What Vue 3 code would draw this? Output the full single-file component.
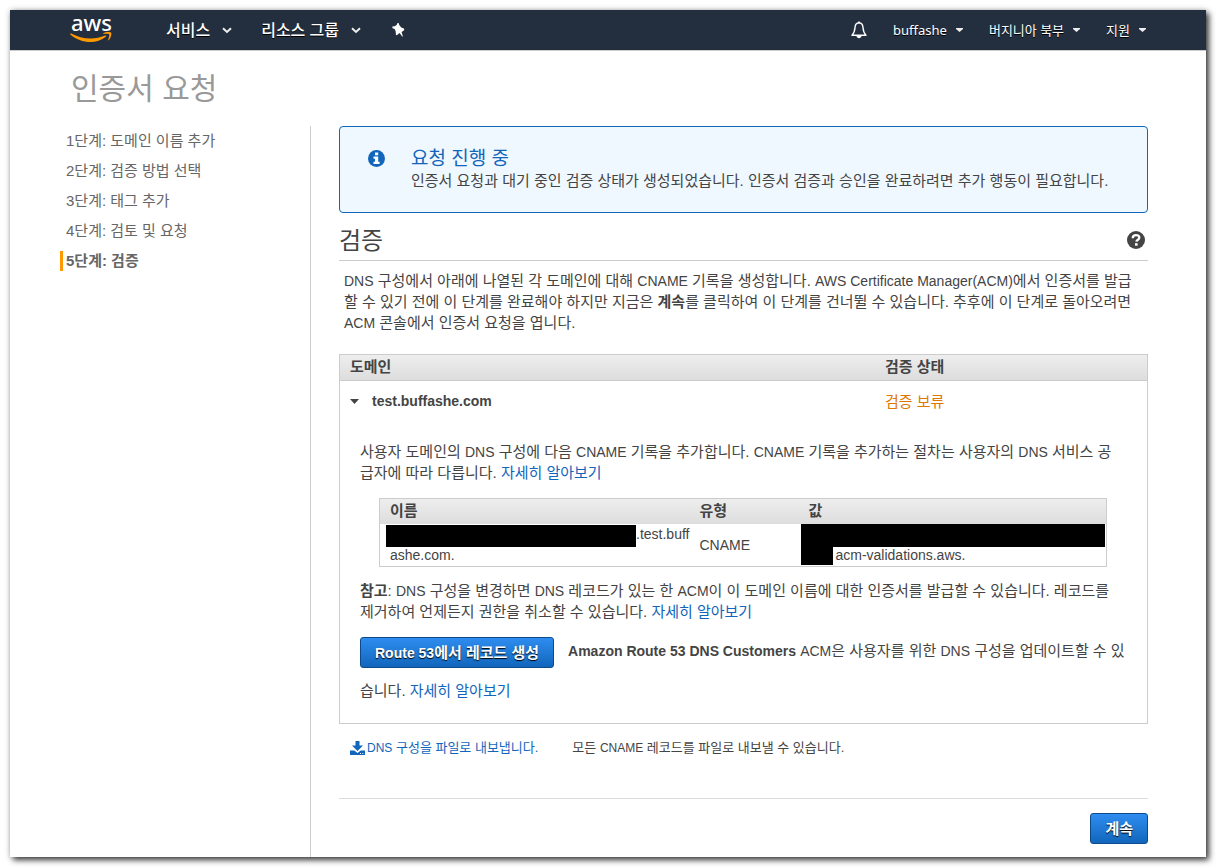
<script setup>
import { ref } from 'vue'

const steps = [
  '1단계: 도메인 이름 추가',
  '2단계: 검증 방법 선택',
  '3단계: 태그 추가',
  '4단계: 검토 및 요청',
  '5단계: 검증',
]
const current = 4
const open = ref(true)
</script>

<template>
  <div class="window">
    <header class="nav">
      <a class="logo" href="#" aria-label="AWS">
        <svg width="42" height="40" viewBox="0 -10 42 40">
          <text x="1" y="15" class="logo-text">aws</text>
          <path d="M.3 18.400c-.5-.6.100-1.200.9-.8C7 20.600 13.500 22.600 20.500 22.600c5 0 10-1.100 14.600-3 .9-.4 1.600.6.700 1.200C31.600 24.300 25.800 26 20.600 26 13 26 5.900 23.200.3 18.400z" fill="#f90" />
          <path d="M33.500 18c-.5.300-.8-.1-.3-.6 2-1.500 6.600-1.700 7.800-.8 1 .9-.1 5.600-2.200 7.500-.4.400-.9.200-.7-.3.500-1.300 1.500-4.400 1.100-5.300-.5-.9-4-.7-5.700-.5z" fill="#f90" />
        </svg>
      </a>
      <nav class="primary">
        <button type="button" class="menu">서비스
          <svg class="chev" width="10" height="7" viewBox="0 0 10 7"><path d="M1 1.300l4 3.700 4-3.700" fill="none" stroke="#eee" stroke-width="2" /></svg>
        </button>
        <button type="button" class="menu">리소스 그룹
          <svg class="chev" width="10" height="7" viewBox="0 0 10 7"><path d="M1 1.300l4 3.700 4-3.700" fill="none" stroke="#eee" stroke-width="2" /></svg>
        </button>
        <button type="button" class="menu" aria-label="고정">
          <svg width="16" height="16" viewBox="0 0 16 16"><path d="M7.200 1.300L8.600 1 9.400 3.300 11.300 5.600 14 6.600 14.200 8.200 11.600 9.900 12.900 14.400 12.200 14.500 9.600 11 6.800 13.200 5.900 12.800 5.700 9.600 4.600 6.900 2.500 6.200 2.300 4.600 4.600 4.300 6.700 2.900z" fill="#fff" /></svg>
        </button>
      </nav>
      <nav class="secondary">
        <button type="button" class="menu bell" aria-label="알림">
          <svg width="16" height="18" viewBox="0 0 16 18"><path d="M8 1.800C5 2 4.200 4.300 4 6.500 3.800 10 3.200 12 1 14.200h14C12.800 12 12.200 10 12 6.500 11.800 4.300 11 2 8 1.800z" fill="none" stroke="#fff" stroke-width="1.400" stroke-linejoin="round" /><path d="M5.500 15h5c-.2 1.300-1.200 2.200-2.500 2.200S5.700 16.300 5.500 15zM7.200.5h1.600v1.500H7.200z" fill="#fff" /></svg>
        </button>
        <button type="button" class="menu">buffashe
          <svg class="caret" width="7" height="4" viewBox="0 0 7 4"><path d="M0 0h7v1L3.500 4 0 1z" fill="#eee" /></svg>
        </button>
        <button type="button" class="menu">버지니아 북부
          <svg class="caret" width="7" height="4" viewBox="0 0 7 4"><path d="M0 0h7v1L3.500 4 0 1z" fill="#eee" /></svg>
        </button>
        <button type="button" class="menu">지원
          <svg class="caret" width="7" height="4" viewBox="0 0 7 4"><path d="M0 0h7v1L3.500 4 0 1z" fill="#eee" /></svg>
        </button>
      </nav>
    </header>

    <h1>인증서 요청</h1>

    <div class="columns">
      <aside>
        <ol class="steps">
          <li v-for="(step, i) in steps" :key="step" :class="{ active: i === current }">{{ step }}</li>
        </ol>
      </aside>

      <main>
        <section class="info">
          <svg width="17" height="17" viewBox="0 0 17 17"><circle cx="8.500" cy="8.500" r="8.500" fill="#16b" /><path d="M7 2.500h3.200v2.700H7zM5.500 6.500h4.700v5.200h1.400v2.300H5.500v-2.300H7V8.800H5.500z" fill="#fff" /></svg>
          <div>
            <h3>요청 진행 중</h3>
            <p>인증서 요청과 대기 중인 검증 상태가 생성되었습니다. 인증서 검증과 승인을 완료하려면 추가 행동이 필요합니다.</p>
          </div>
        </section>

        <div class="heading">
          <h2>검증</h2>
          <button type="button" class="help" aria-label="도움말">
            <svg width="18" height="18" viewBox="0 0 18 18"><circle cx="9" cy="9" r="9" fill="#444" /><path d="M5.700 7.200C5.800 5 7.200 4.200 9 4.200s3.300.9 3.300 2.600c0 2-2.600 1.900-2.900 3.900" fill="none" stroke="#fff" stroke-width="2.300" /><path d="M8 12.200h2.600v2.500H8z" fill="#fff" /></svg>
          </button>
        </div>

        <p class="intro"><span lang="en">DNS</span> 구성에서 아래에 나열된 각 도메인에 대해 <span lang="en">CNAME</span> 기록을 생성합니다. <span lang="en">AWS Certificate Manager(ACM)</span>에서 인증서를 발급<br>할 수 있기 전에 이 단계를 완료해야 하지만 지금은 <b>계속</b>를 클릭하여 이 단계를 건너뛸 수 있습니다. 추후에 이 단계로 돌아오려면<br><span lang="en">ACM</span> 콘솔에서 인증서 요청을 엽니다.</p>

        <table class="domains">
          <thead>
            <tr><th scope="col">도메인</th><th scope="col" class="state">검증 상태</th></tr>
          </thead>
          <tbody>
            <tr class="domain">
              <td>
                <button type="button" class="toggle" :aria-expanded="open" @click="open = !open">
                  <svg width="9" height="5" viewBox="0 0 9 5"><path d="M0 0h9L4.500 5z" fill="#444" /></svg>
                  <b lang="en">test.buffashe.com</b>
                </button>
              </td>
              <td class="pending">검증 보류</td>
            </tr>
            <tr v-if="open">
              <td colspan="2" class="detail">
                <p>사용자 도메인의 <span lang="en">DNS</span> 구성에 다음 <span lang="en">CNAME</span> 기록을 추가합니다. <span lang="en">CNAME</span> 기록을 추가하는 절차는 사용자의 <span lang="en">DNS</span> 서비스 공<br>급자에 따라 다릅니다. <a href="#">자세히 알아보기</a></p>
                <table class="records">
                  <thead>
                    <tr><th scope="col" class="c-name">이름</th><th scope="col" class="c-type">유형</th><th scope="col">값</th></tr>
                  </thead>
                  <tbody>
                    <tr>
                      <td class="name">
                        <div class="line"><i class="mask wide"></i><span>.test.buff</span></div>
                        <div class="rest">ashe.com.</div>
                      </td>
                      <td class="type">CNAME</td>
                      <td class="value">
                        <i class="mask full"></i>
                        <div class="line"><i class="mask small"></i><span>acm-validations.aws.</span></div>
                      </td>
                    </tr>
                  </tbody>
                </table>
                <p><b>참고</b>: <span lang="en">DNS</span> 구성을 변경하면 <span lang="en">DNS</span> 레코드가 있는 한 <span lang="en">ACM</span>이 이 도메인 이름에 대한 인증서를 발급할 수 있습니다. 레코드를<br>제거하여 언제든지 권한을 취소할 수 있습니다. <a href="#">자세히 알아보기</a></p>
                <p class="route">
                  <button type="button" class="primary-btn"><span lang="en">Route 53</span>에서 레코드 생성</button><b lang="en">Amazon Route 53 DNS Customers</b> <span lang="en">ACM</span>은 사용자를 위한 <span lang="en">DNS</span> 구성을 업데이트할 수 있<br>습니다. <a href="#">자세히 알아보기</a>
                </p>
              </td>
            </tr>
          </tbody>
        </table>

        <div class="export">
          <a href="#">
            <svg width="15" height="14" viewBox="0 0 15 14"><path d="M5.500 0h4v4.500H13L7.500 10 2 4.500h3.500z" fill="#16b" /><path d="M0 9.500h4.200L7.500 12l3.300-2.500H15V14H0z" fill="#16b" /><path d="M10 12h1v1h-1zM12.300 12h1v1h-1z" fill="#fff" /></svg>
            <span><span lang="en">DNS</span> 구성을 파일로 내보냅니다.</span>
          </a>
          <span>모든 <span lang="en">CNAME</span> 레코드를 파일로 내보낼 수 있습니다.</span>
        </div>

        <footer><button type="button" class="primary-btn">계속</button></footer>
      </main>
    </div>
  </div>
</template>

<style>
body {
  background: #fff;
}
</style>

<style scoped>
.window {
  display: flex;
  flex-direction: column;
  box-sizing: border-box;
  min-height: calc(100vh - 21px);
  margin: 10px 11px 11px 10px;
  background: #fff;
  box-shadow: 3px 3px 6px rgba(0, 0, 0, 0.75), 0 0 6px rgba(0, 0, 0, 0.2);
  color: #444;
  font: 15px/21px "Liberation Sans", "Noto Sans CJK KR", sans-serif;
}
[lang="en"] {
  font-size: 14px;
  line-height: 1;
}
h1, h2, h3, p {
  margin: 0;
  font-weight: 400;
}
a {
  color: #16b;
  text-decoration: none;
}
button {
  padding: 0;
  border: 0;
  background: none;
  color: inherit;
  font: inherit;
  cursor: pointer;
}

.nav {
  display: flex;
  align-items: center;
  height: 40px;
  padding: 0 60px;
  background: #232f3e;
  border-bottom: 1px solid #ccc;
  color: #fff;
  font-family: "Noto Sans", "Noto Sans CJK KR", sans-serif;
}
.logo {
  display: flex;
  margin-top: -8px;
}
.logo-text {
  fill: #fff;
  font: 500 22px "Noto Sans", sans-serif;
}
.primary, .secondary {
  display: flex;
  align-items: center;
}
.primary {
  gap: 29px;
  margin-left: 54px;
  font-size: 16px;
  font-weight: 500;
}
.secondary {
  gap: 26px;
  margin-left: auto;
  font-size: 13px;
}
.menu {
  display: flex;
  align-items: center;
  gap: 9px;
  text-shadow: 0 1px 0 #000;
}
.primary .menu {
  gap: 12px;
}

h1 {
  padding: 18px 0 18px 61px;
  color: #999;
  font-size: 30px;
  line-height: 39px;
}
.columns {
  display: grid;
  grid-template-columns: 301px 1fr;
  flex: 1;
}
aside {
  border-right: 1px solid #ccc;
}
.steps {
  margin: 0;
  padding: 5px 0 0 50px;
  list-style: none;
  color: #666;
  line-height: 20px;
}
.steps li {
  margin-bottom: 10px;
  padding-left: 3px;
  border-left: 3px solid transparent;
}
.steps .active {
  border-color: #f90;
  font-weight: 700;
}

main {
  margin: 0 58px 0 28px;
  min-width: 0;
}
.info {
  display: flex;
  gap: 26px;
  padding: 20px 24px 21px 28px;
  border: 1px solid #16b;
  border-radius: 4px;
  background: #f0f8ff;
}
.info svg {
  flex: none;
  margin-top: 3px;
}
.info h3 {
  color: #16b;
  font-size: 19px;
  line-height: 23px;
}
.heading {
  display: flex;
  align-items: center;
  justify-content: space-between;
  height: 47px;
  padding-right: 3px;
  border-bottom: 1px solid #ccc;
}
.heading h2 {
  margin-top: 8px;
  font-size: 24px;
}
.help {
  display: flex;
  margin-top: 7px;
}
.intro {
  padding: 9px 0 21px 5px;
}

table {
  width: 100%;
  border: 1px solid #ccc;
  border-spacing: 0;
}
th {
  padding: 0 10px 1px;
  background: linear-gradient(#eee, #ddd);
  text-align: left;
  line-height: 24px;
}
td {
  padding: 0;
}
.domains > thead th {
  border-bottom: 1px solid #ccc;
}
.state {
  width: 252px;
}
.domain td {
  height: 40px;
  padding: 0 10px;
}
.domain .pending {
  color: #e07700;
}
.toggle {
  display: flex;
  align-items: center;
  gap: 13px;
}
.domains td.detail {
  padding: 20px 8px 12px 20px;
}
.records {
  width: auto;
  margin: 15px 32px 13px 19px;
  min-width: calc(100% - 51px);
  table-layout: fixed;
  font-size: 14px;
}
.records th {
  font-size: 15px;
}
.c-name {
  width: 288px;
}
.c-type {
  width: 82px;
}
.records th:last-child {
  padding-left: 17px;
}
.records td {
  vertical-align: top;
}
.records td.name {
  padding-left: 6px;
}
.rest {
  padding-left: 4px;
}
.records td.type {
  padding: 0 10px;
  vertical-align: middle;
}
.records td.value {
  padding: 0 1px 0 10px;
}
.line {
  display: flex;
}
.mask {
  display: block;
  background: #000;
}
.wide {
  width: 250px;
  height: 22px;
  margin-top: 1px;
}
.name .line {
  height: 21px;
}
.full {
  height: 23px;
}
.value .line {
  gap: 2px;
  height: 18px;
  line-height: 17px;
}
.small {
  width: 32px;
}
.route {
  line-height: 40px;
  margin-top: 9px;
}
.primary-btn {
  height: 31px;
  padding: 0 14px;
  border: 1px solid #0c4a8c;
  border-radius: 3px;
  background: linear-gradient(#2e8df0, #16b);
  color: #fff;
  font-weight: 700;
  line-height: 27px;
  text-shadow: 0 1px 1px #000;
}
.route .primary-btn {
  margin-right: 14px;
  vertical-align: middle;
}
.export {
  display: flex;
  gap: 34px;
  padding: 13px 11px 40px;
  font-size: 13px;
}
.export [lang="en"] {
  font-size: 12px;
}
.export a {
  display: flex;
  align-items: center;
  gap: 2px;
}
footer {
  display: flex;
  justify-content: flex-end;
  padding: 14px 0 13px;
  border-top: 1px solid #ddd;
}
</style>
